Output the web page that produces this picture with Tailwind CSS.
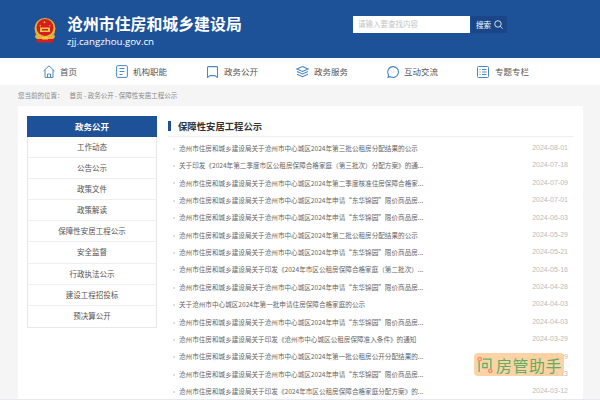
<!DOCTYPE html>
<html lang="zh-CN">
<head>
    <meta charset="UTF-8">
    <title>保障性安居工程公示</title>
    <script src="https://cdn.jsdelivr.net/npm/@tailwindcss/browser@4"></script>
</head>
<body class="relative w-[600px] h-[400px] overflow-hidden bg-[#f5f5f5] font-['Noto_Sans_CJK_SC','Liberation_Sans',sans-serif]">

    <!-- header -->
    <header class="h-[58px] bg-[#1d5299] flex items-center pl-[33px]">
        <svg class="w-[24px] h-[25px] mr-[10px] mt-[3px]" viewBox="0 0 24 25">
            <circle cx="12" cy="10.5" r="10.5" fill="#e8b23a"/>
            <circle cx="12" cy="9.5" r="8.5" fill="#d4201c"/>
            <path d="M11 3.5l1 .1 .4 1 -1 .6 -.9-.6z M7 7l.8.3v.9l-.8.2-.6-.7z M16.8 7l.7.5-.3.8-.8-.1-.2-.8z" fill="#f6d04d"/>
            <rect x="7" y="9.5" width="10" height="4.5" fill="#f3c64a"/>
            <rect x="9" y="11" width="6" height="1.5" fill="#d4201c"/>
            <path d="M3 16c2 3 5 3.8 9 3.8s7-.8 9-3.8l1 3c-2 3-6 4-10 4s-8-1-10-4z" fill="#e8b23a"/>
            <rect x="3.5" y="21" width="17" height="3.5" rx="1" fill="#d4201c"/>
            <rect x="9" y="19" width="6" height="2.5" fill="#f3c64a"/>
        </svg>
        <div class="w-[286px] text-white">
            <div class="text-[15.9px] leading-[20px] font-bold whitespace-nowrap mt-[3px]">沧州市住房和城乡建设局</div>
            <div class="text-[9.7px] leading-[13px] mt-[1px] font-['Open_Sans',sans-serif]">zjj.cangzhou.gov.cn</div>
        </div>
        <div class="w-[117px] h-[17px] bg-white text-[#c4c4c4] text-[7.5px] leading-[16px] pl-[5px] mb-[9px]">请输入要查找内容</div>
        <div class="w-[36px] h-[17px] ml-[1px] mb-[9px] bg-[#1a4689] text-white text-[7.5px] flex items-center pl-[5px] gap-[3px]">
            搜索
            <svg class="w-[9px] h-[9px]" viewBox="0 0 10 10" fill="none" stroke="#fff" stroke-width="0.9">
                <circle cx="4.4" cy="4.4" r="3.6"/>
                <path d="M7 7l2.5 2.5"/>
            </svg>
        </div>
    </header>

    <!-- nav -->
    <nav class="h-[27px] bg-white flex items-center pl-[43px] text-[8.5px] text-[#555]">
        <a class="w-[73px] flex items-center gap-[5px]">
            <svg class="w-[12px] h-[13px]" viewBox="0 0 12 13" fill="none" stroke="#4a88c9" stroke-width="1">
                <path d="M.6 6L6 .8 11.4 6M2 5v7.4h8V5"/>
                <path d="M4.5 12.4V9h3v3.4"/>
            </svg>
            首页
        </a>
        <a class="w-[91px] flex items-center gap-[5px]">
            <svg class="w-[12px] h-[13px]" viewBox="0 0 12 13" fill="none" stroke="#4a88c9" stroke-width="1">
                <rect x=".6" y=".6" width="10.8" height="11.8" rx="1.2"/>
                <path d="M3.5 3.5h5M3.5 6.5h5M3.5 9.5h3"/>
            </svg>
            机构职能
        </a>
        <a class="w-[89px] flex items-center gap-[6px]">
            <svg class="w-[11px] h-[12px]" viewBox="0 0 11 12" fill="none" stroke="#4a88c9" stroke-width="1.1">
                <path d="M1.5.6h8a1 1 0 0 1 1 1v9.8L7.8 9.6H3.2L.5 11.4V1.6a1 1 0 0 1 1-1z"/>
            </svg>
            政务公开
        </a>
        <a class="w-[91px] flex items-center gap-[5px]">
            <svg class="w-[13px] h-[12px]" viewBox="0 0 13 12" fill="none" stroke="#4a88c9" stroke-width="1.1">
                <path d="M6.5.6L12 3 6.5 5.4 1 3z"/>
                <path d="M1 5.5l5.5 2.4L12 5.5"/>
                <path d="M1 8.2l5.5 2.5L12 8.2"/>
            </svg>
            政务服务
        </a>
        <a class="w-[90px] flex items-center gap-[5px]">
            <svg class="w-[12px] h-[12px]" viewBox="0 0 12 12" fill="none" stroke="#4a88c9" stroke-width="1.1">
                <path d="M6 .6a5.4 5.4 0 1 1-2.6 10.1L1 11.4l.6-2.5A5.4 5.4 0 0 1 6 .6z"/>
                <path d="M3.7 6h.6M5.7 6h.6M7.7 6h.6" stroke="#9dbfe3"/>
            </svg>
            互动交流
        </a>
        <a class="flex items-center gap-[6px]">
            <svg class="w-[12px] h-[12px]" viewBox="0 0 12 12" fill="none" stroke="#4a88c9" stroke-width="1">
                <rect x=".5" y=".5" width="11" height="11" rx="1"/>
                <path d="M2.5 3.5h1M5 3.5h4.5M2.5 6h1M5 6h4.5M2.5 8.5h1M5 8.5h4.5"/>
            </svg>
            专题专栏
        </a>
    </nav>

    <!-- breadcrumb -->
    <div class="h-[21px] pl-[18px] text-[6.5px] leading-[21px] text-[#888]">
        <span class="mr-[6px]">您当前的位置：</span>首页 - 政务公开 - 保障性安居工程公示
    </div>

    <!-- main -->
    <main class="ml-[18px] w-[565px] h-[293px] bg-white flex pt-[10px] pl-[9px]">
        <aside class="w-[130px]">
            <div class="h-[21px] bg-[#1d5299] text-white text-[8.5px] leading-[21px] font-bold text-center">政务公开</div>
            <ul class="border-x border-b border-[#e8e8e8] text-[7.5px] text-[#555] text-center">
                <li class="h-[21.1px] leading-[20px] border-b border-[#eee]">工作动态</li>
                <li class="h-[21.1px] leading-[20px] border-b border-[#eee]">公告公示</li>
                <li class="h-[21.1px] leading-[20px] border-b border-[#eee]">政策文件</li>
                <li class="h-[21.1px] leading-[20px] border-b border-[#eee]">政策解读</li>
                <li class="h-[21.1px] leading-[20px] border-b border-[#eee]">保障性安居工程公示</li>
                <li class="h-[21.1px] leading-[20px] border-b border-[#eee]">安全监督</li>
                <li class="h-[21.1px] leading-[20px] border-b border-[#eee]">行政执法公示</li>
                <li class="h-[21.1px] leading-[20px] border-b border-[#eee]">建设工程招投标</li>
                <li class="h-[21px] leading-[20px]">预决算公开</li>
            </ul>
        </aside>

        <section class="ml-[11px] w-[405px]">
            <div class="h-[21px] border-b border-[#eee] flex items-center">
                <span class="w-[3px] h-[10px] bg-[#1d5299] mr-[7px]"></span>
                <h2 class="text-[9.35px] font-bold text-[#333]">保障性安居工程公示</h2>
            </div>
            <ul class="mt-[3px] text-[6.6px] text-[#666]">
                <li class="h-[17.4px] flex items-center pl-[5px] pr-[5px]"><i class="w-[2px] h-[2px] bg-[#ddd] mr-[4px]"></i><span class="flex-1 whitespace-nowrap">沧州市住房和城乡建设局关于沧州市中心城区2024年第三批公租房分配结果的公示</span><time class="text-[7px] text-[#bbb] font-['Liberation_Sans'] mb-[1px]">2024-08-01</time></li>
                <li class="h-[17.4px] flex items-center pl-[5px] pr-[5px]"><i class="w-[2px] h-[2px] bg-[#ddd] mr-[4px]"></i><span class="flex-1 whitespace-nowrap">关于印发《2024年第二季度市区公租房保障合格家庭（第三批次）分配方案》的通...</span><time class="text-[7px] text-[#bbb] font-['Liberation_Sans'] mb-[1px]">2024-07-18</time></li>
                <li class="h-[17.4px] flex items-center pl-[5px] pr-[5px]"><i class="w-[2px] h-[2px] bg-[#ddd] mr-[4px]"></i><span class="flex-1 whitespace-nowrap">沧州市住房和城乡建设局关于沧州市中心城区2024年第二季度核准住房保障合格家...</span><time class="text-[7px] text-[#bbb] font-['Liberation_Sans'] mb-[1px]">2024-07-09</time></li>
                <li class="h-[17.4px] flex items-center pl-[5px] pr-[5px]"><i class="w-[2px] h-[2px] bg-[#ddd] mr-[4px]"></i><span class="flex-1 whitespace-nowrap">沧州市住房和城乡建设局关于沧州市中心城区2024年申请“东华锦园”限价商品房...</span><time class="text-[7px] text-[#bbb] font-['Liberation_Sans'] mb-[1px]">2024-07-01</time></li>
                <li class="h-[17.4px] flex items-center pl-[5px] pr-[5px]"><i class="w-[2px] h-[2px] bg-[#ddd] mr-[4px]"></i><span class="flex-1 whitespace-nowrap">沧州市住房和城乡建设局关于沧州市中心城区2024年申请“东华锦园”限价商品房...</span><time class="text-[7px] text-[#bbb] font-['Liberation_Sans'] mb-[1px]">2024-06-03</time></li>
                <li class="h-[17.4px] flex items-center pl-[5px] pr-[5px]"><i class="w-[2px] h-[2px] bg-[#ddd] mr-[4px]"></i><span class="flex-1 whitespace-nowrap">沧州市住房和城乡建设局关于沧州市中心城区2024年第二批公租房分配结果的公示</span><time class="text-[7px] text-[#bbb] font-['Liberation_Sans'] mb-[1px]">2024-05-29</time></li>
                <li class="h-[17.4px] flex items-center pl-[5px] pr-[5px]"><i class="w-[2px] h-[2px] bg-[#ddd] mr-[4px]"></i><span class="flex-1 whitespace-nowrap">沧州市住房和城乡建设局关于沧州市中心城区2024年申请“东华锦园”限价商品房...</span><time class="text-[7px] text-[#bbb] font-['Liberation_Sans'] mb-[1px]">2024-05-21</time></li>
                <li class="h-[17.4px] flex items-center pl-[5px] pr-[5px]"><i class="w-[2px] h-[2px] bg-[#ddd] mr-[4px]"></i><span class="flex-1 whitespace-nowrap">沧州市住房和城乡建设局关于印发《2024年市区公租房保障合格家庭（第二批次）...</span><time class="text-[7px] text-[#bbb] font-['Liberation_Sans'] mb-[1px]">2024-05-16</time></li>
                <li class="h-[17.4px] flex items-center pl-[5px] pr-[5px]"><i class="w-[2px] h-[2px] bg-[#ddd] mr-[4px]"></i><span class="flex-1 whitespace-nowrap">沧州市住房和城乡建设局关于沧州市中心城区2024年申请“东华锦园”限价商品房...</span><time class="text-[7px] text-[#bbb] font-['Liberation_Sans'] mb-[1px]">2024-04-28</time></li>
                <li class="h-[17.4px] flex items-center pl-[5px] pr-[5px]"><i class="w-[2px] h-[2px] bg-[#ddd] mr-[4px]"></i><span class="flex-1 whitespace-nowrap">关于沧州市中心城区2024年第一批申请住房保障合格家庭的公示</span><time class="text-[7px] text-[#bbb] font-['Liberation_Sans'] mb-[1px]">2024-04-03</time></li>
                <li class="h-[17.4px] flex items-center pl-[5px] pr-[5px]"><i class="w-[2px] h-[2px] bg-[#ddd] mr-[4px]"></i><span class="flex-1 whitespace-nowrap">沧州市住房和城乡建设局关于沧州市中心城区2024年申请“东华锦园”限价商品房...</span><time class="text-[7px] text-[#bbb] font-['Liberation_Sans'] mb-[1px]">2024-04-03</time></li>
                <li class="h-[17.4px] flex items-center pl-[5px] pr-[5px]"><i class="w-[2px] h-[2px] bg-[#ddd] mr-[4px]"></i><span class="flex-1 whitespace-nowrap">沧州市住房和城乡建设局关于印发《沧州市中心城区公租房保障准入条件》的通知</span><time class="text-[7px] text-[#bbb] font-['Liberation_Sans'] mb-[1px]">2024-03-29</time></li>
                <li class="h-[17.4px] flex items-center pl-[5px] pr-[5px]"><i class="w-[2px] h-[2px] bg-[#ddd] mr-[4px]"></i><span class="flex-1 whitespace-nowrap">沧州市住房和城乡建设局关于沧州市中心城区2024年第一批公租房公开分配结果的...</span><time class="text-[7px] text-[#bbb] font-['Liberation_Sans'] mb-[1px]">2024-03-29</time></li>
                <li class="h-[17.4px] flex items-center pl-[5px] pr-[5px]"><i class="w-[2px] h-[2px] bg-[#ddd] mr-[4px]"></i><span class="flex-1 whitespace-nowrap">沧州市住房和城乡建设局关于沧州市中心城区2024年申请“东华锦园”限价商品房...</span><time class="text-[7px] text-[#bbb] font-['Liberation_Sans'] mb-[1px]">2024-03-13</time></li>
                <li class="h-[17.4px] flex items-center pl-[5px] pr-[5px]"><i class="w-[2px] h-[2px] bg-[#ddd] mr-[4px]"></i><span class="flex-1 whitespace-nowrap">沧州市住房和城乡建设局关于印发《2024年市区公租房保障合格家庭分配方案》的...</span><time class="text-[7px] text-[#bbb] font-['Liberation_Sans'] mb-[1px]">2024-03-12</time></li>
            </ul>
        </section>
    </main>

    <!-- bottom edge -->
    <div class="absolute left-0 bottom-0 w-full h-[1px] bg-[#e6e8f2]"></div>

    <!-- watermark -->
    <div class="absolute left-[474px] top-[353px] w-[90px] h-[23px] rounded-[4px] bg-[#fbcb96]/85 flex items-center pl-[3px] text-[16px] tracking-[0.5px] text-[#62ad62]">
        <svg class="w-[16px] h-[16px] mr-[3px]" viewBox="0 0 14 15" fill="none" stroke="#62ad62" stroke-width="1.2">
            <path d="M1.5 3v11M5 2h7.5v11"/>
            <rect x="5" y="6" width="4" height="4"/>
            <circle cx="2" cy="2" r="1.6" stroke="#f58d5e" fill="#fbcb96"/>
            <circle cx="12" cy="13" r="1.6" stroke="#f58d5e" fill="#fbcb96"/>
        </svg>
        房管助手
    </div>
</body>
</html>
